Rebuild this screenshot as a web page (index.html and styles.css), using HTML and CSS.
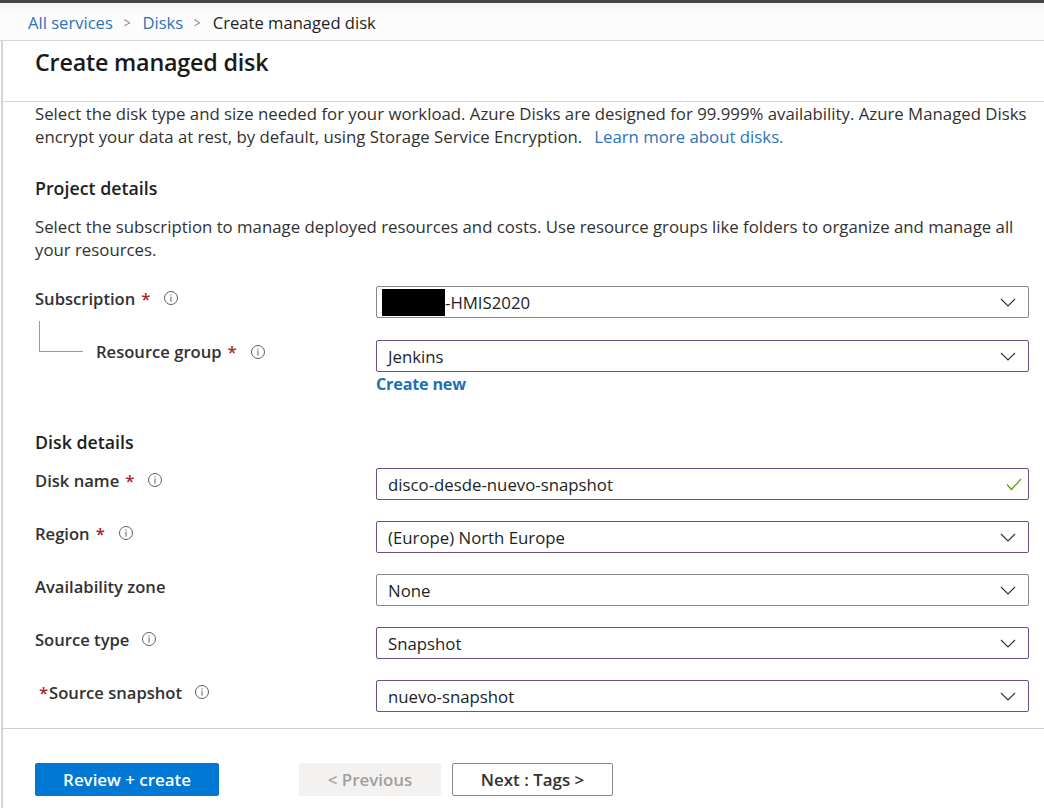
FILE: index.html
```html
<!DOCTYPE html>
<html lang="en">
<head>
<meta charset="utf-8">
<title>Create managed disk</title>
<link rel="stylesheet" href="styles.css">
</head>
<body>
<div class="topbar"></div>
<nav class="breadcrumb">
  <a class="crumb-link">All services</a>
  <span class="sep">&gt;</span>
  <a class="crumb-link">Disks</a>
  <span class="sep">&gt;</span>
  <span class="crumb-current">Create managed disk</span>
</nav>
<main class="blade">
  <header class="blade-header">
    <h1 class="title">Create managed disk</h1>
  </header>
  <section class="content">
    <div class="desc">
      <div class="desc-line">Select the disk type and size needed for your workload. Azure Disks are designed for 99.999% availability. Azure Managed Disks</div>
      <div class="desc-line"><span>encrypt your data at rest, by default, using Storage Service Encryption.</span><a class="link">Learn more about disks.</a></div>
    </div>

    <h2 class="section-title first">Project details</h2>
    <p class="desc">Select the subscription to manage deployed resources and costs. Use resource groups like folders to organize and manage all your resources.</p>

    <div class="form-row row-sub">
      <div class="label">Subscription <span class="req">*</span>
        <svg class="info" width="16" height="16" viewBox="0 0 16 16"><circle cx="8" cy="8" r="6.5" fill="none" stroke="#605e5c" stroke-width="1"/><rect x="7.5" y="4.3" width="1" height="1.2" fill="#605e5c"/><rect x="7.5" y="6.6" width="1" height="5" fill="#605e5c"/></svg>
      </div>
      <div class="field">
        <div class="select gray">
          <span class="value"><span class="redacted"></span>-HMIS2020</span>
          <svg class="chev" width="16" height="9" viewBox="0 0 16 9"><polyline points="1,1 8,8 15,1" fill="none" stroke="#323130" stroke-width="1.1"/></svg>
        </div>
      </div>
    </div>

    <div class="form-row row-rg">
      <div class="label label-rg"><span class="connector"></span>Resource group <span class="req">*</span>
        <svg class="info" width="16" height="16" viewBox="0 0 16 16"><circle cx="8" cy="8" r="6.5" fill="none" stroke="#605e5c" stroke-width="1"/><rect x="7.5" y="4.3" width="1" height="1.2" fill="#605e5c"/><rect x="7.5" y="6.6" width="1" height="5" fill="#605e5c"/></svg>
      </div>
      <div class="field">
        <div class="select purple">
          <span class="value">Jenkins</span>
          <svg class="chev" width="16" height="9" viewBox="0 0 16 9"><polyline points="1,1 8,8 15,1" fill="none" stroke="#323130" stroke-width="1.1"/></svg>
        </div>
        <a class="create-new">Create new</a>
      </div>
    </div>

    <h2 class="section-title second">Disk details</h2>

    <div class="form-row">
      <div class="label">Disk name <span class="req">*</span>
        <svg class="info" width="16" height="16" viewBox="0 0 16 16"><circle cx="8" cy="8" r="6.5" fill="none" stroke="#605e5c" stroke-width="1"/><rect x="7.5" y="4.3" width="1" height="1.2" fill="#605e5c"/><rect x="7.5" y="6.6" width="1" height="5" fill="#605e5c"/></svg>
      </div>
      <div class="field">
        <div class="select purple">
          <span class="value">disco-desde-nuevo-snapshot</span>
          <svg class="check" width="16" height="13" viewBox="0 0 16 13"><polyline points="1,6.5 5.5,11.5 15,1" fill="none" stroke="#57a300" stroke-width="1.2"/></svg>
        </div>
      </div>
    </div>

    <div class="form-row">
      <div class="label">Region <span class="req">*</span>
        <svg class="info" width="16" height="16" viewBox="0 0 16 16"><circle cx="8" cy="8" r="6.5" fill="none" stroke="#605e5c" stroke-width="1"/><rect x="7.5" y="4.3" width="1" height="1.2" fill="#605e5c"/><rect x="7.5" y="6.6" width="1" height="5" fill="#605e5c"/></svg>
      </div>
      <div class="field">
        <div class="select purple">
          <span class="value">(Europe) North Europe</span>
          <svg class="chev" width="16" height="9" viewBox="0 0 16 9"><polyline points="1,1 8,8 15,1" fill="none" stroke="#323130" stroke-width="1.1"/></svg>
        </div>
      </div>
    </div>

    <div class="form-row">
      <div class="label">Availability zone</div>
      <div class="field">
        <div class="select gray">
          <span class="value">None</span>
          <svg class="chev" width="16" height="9" viewBox="0 0 16 9"><polyline points="1,1 8,8 15,1" fill="none" stroke="#323130" stroke-width="1.1"/></svg>
        </div>
      </div>
    </div>

    <div class="form-row">
      <div class="label">Source type
        <svg class="info info-gap" width="16" height="16" viewBox="0 0 16 16"><circle cx="8" cy="8" r="6.5" fill="none" stroke="#605e5c" stroke-width="1"/><rect x="7.5" y="4.3" width="1" height="1.2" fill="#605e5c"/><rect x="7.5" y="6.6" width="1" height="5" fill="#605e5c"/></svg>
      </div>
      <div class="field">
        <div class="select purple">
          <span class="value">Snapshot</span>
          <svg class="chev" width="16" height="9" viewBox="0 0 16 9"><polyline points="1,1 8,8 15,1" fill="none" stroke="#323130" stroke-width="1.1"/></svg>
        </div>
      </div>
    </div>

    <div class="form-row">
      <div class="label"><span class="req-pre">*</span>Source snapshot
        <svg class="info info-gap" width="16" height="16" viewBox="0 0 16 16"><circle cx="8" cy="8" r="6.5" fill="none" stroke="#605e5c" stroke-width="1"/><rect x="7.5" y="4.3" width="1" height="1.2" fill="#605e5c"/><rect x="7.5" y="6.6" width="1" height="5" fill="#605e5c"/></svg>
      </div>
      <div class="field">
        <div class="select purple">
          <span class="value">nuevo-snapshot</span>
          <svg class="chev" width="16" height="9" viewBox="0 0 16 9"><polyline points="1,1 8,8 15,1" fill="none" stroke="#323130" stroke-width="1.1"/></svg>
        </div>
      </div>
    </div>
  </section>
  <footer class="footer">
    <button class="btn btn-primary">Review + create</button>
    <button class="btn btn-disabled">&lt; Previous</button>
    <button class="btn btn-default">Next : Tags &gt;</button>
  </footer>
</main>
</body>
</html>
```

FILE: styles.css
```css
* { box-sizing: border-box; }

html, body {
  margin: 0;
  padding: 0;
  background: #ffffff;
}

body {
  font-family: "Open Sans", "Noto Sans", "Liberation Sans", sans-serif;
  color: #323130;
  width: 1044px;
  height: 808px;
  overflow: hidden;
}

.topbar {
  height: 3px;
  background: #454545;
}

.breadcrumb {
  height: 38px;
  display: flex;
  align-items: center;
  padding-left: 28px;
  padding-top: 1px;
  background: linear-gradient(#f3f3f3, #fcfcfc 30%, #fdfdfd);
  border-bottom: 1px solid #d6d6d6;
  font-size: 16.6px;
}

.crumb-link {
  color: #2e72b8;
}

.sep {
  color: #8a8886;
  margin: 0 11px 0 10px;
  font-size: 15px;
  transform: scaleX(0.8);
}

.crumb-current {
  color: #201f1e;
}

.blade {
  border-left: 2px solid #d4d4d4;
  margin-left: 1px;
  height: 767px;
  display: flex;
  flex-direction: column;
}

.blade-header {
  height: 61px;
  border-bottom: 1px solid #d6d6d6;
  padding: 6px 0 0 32px;
}

.title {
  margin: 0;
  font-size: 23.3px;
  font-weight: 600;
  line-height: 30px;
  color: #1b1a19;
  letter-spacing: -0.2px;
}

.content {
  padding: 0 8px 16px 32px;
  border-bottom: 1px solid #d0d0d0;
}

.desc {
  margin: 0;
  font-size: 16.8px;
  line-height: 23px;
  color: #323130;
}

.desc-line {
  display: flex;
  white-space: nowrap;
}

.link {
  color: #2e72b8;
  margin-left: 12px;
}

.section-title {
  margin: 0;
  font-size: 17.8px;
  font-weight: 600;
  line-height: 24px;
  color: #201f1e;
}

.section-title.first {
  margin-top: 28px;
  margin-bottom: 15px;
}

.section-title.second {
  margin-top: 34px;
  margin-bottom: 14px;
}

.form-row {
  display: grid;
  grid-template-columns: 341px 653px;
  margin-bottom: 21px;
}

.form-row:last-child {
  margin-bottom: 0;
}

.row-sub {
  margin-top: 25px;
  margin-bottom: 22px;
}

.row-rg {
  margin-bottom: 33px;
}

.label {
  display: flex;
  align-items: center;
  height: 24px;
  font-size: 16.6px;
  font-weight: 600;
  color: #323130;
  white-space: nowrap;
}

.req {
  color: #a4262c;
  margin-left: 6px;
  margin-right: 13px;
}

.req-pre {
  color: #a4262c;
  margin-left: 4px;
  margin-right: 1px;
}

.info {
  display: block;
  flex: none;
}

.info-gap { margin-left: 12px; }

.label-rg {
  align-items: flex-start;
  line-height: 24px;
}

.label-rg .info { margin-top: 4px; }

.connector {
  flex: none;
  width: 44px;
  height: 31px;
  margin-top: -19px;
  margin-left: 4px;
  margin-right: 13px;
  border-left: 1px solid #9a9a9a;
  border-bottom: 1px solid #9a9a9a;
}

.field {
  display: flex;
  flex-direction: column;
}

.select {
  height: 32px;
  border: 1px solid #8a8886;
  border-radius: 2px;
  display: flex;
  align-items: center;
  justify-content: space-between;
  padding: 0 12px 0 11px;
  font-size: 16.8px;
  color: #201f1e;
}

.select.purple {
  border-color: #6f4f85;
}

.value {
  display: flex;
  align-items: center;
}

.redacted {
  display: inline-block;
  width: 63px;
  height: 27px;
  background: #000;
  margin-left: -6px;
}

.chev { display: block; margin-top: 1px; }

.check { display: block; margin-right: -6px; }

.create-new {
  color: #1d6fb8;
  font-weight: 700;
  font-size: 16.2px;
  line-height: 24px;
  letter-spacing: -0.2px;
}

.footer {
  display: flex;
  align-items: flex-start;
  padding: 34px 0 0 32px;
}

.btn {
  height: 33px;
  font-family: "Open Sans", "Noto Sans", "Liberation Sans", sans-serif;
  font-size: 16.9px;
  border-radius: 2px;
  padding: 0;
  cursor: pointer;
}

.btn-primary {
  width: 184px;
  background: #0078d4;
  color: #ffffff;
  border: 1px solid #0078d4;
  font-weight: 600;
  margin-right: 80px;
}

.btn-disabled {
  width: 142px;
  background: #f3f2f1;
  color: #a19f9d;
  border: 1px solid #f3f2f1;
  margin-right: 11px;
  font-weight: 600;
}

.btn-default {
  width: 161px;
  background: #ffffff;
  color: #323130;
  border: 1px solid #8a8886;
  font-weight: 600;
}
```
